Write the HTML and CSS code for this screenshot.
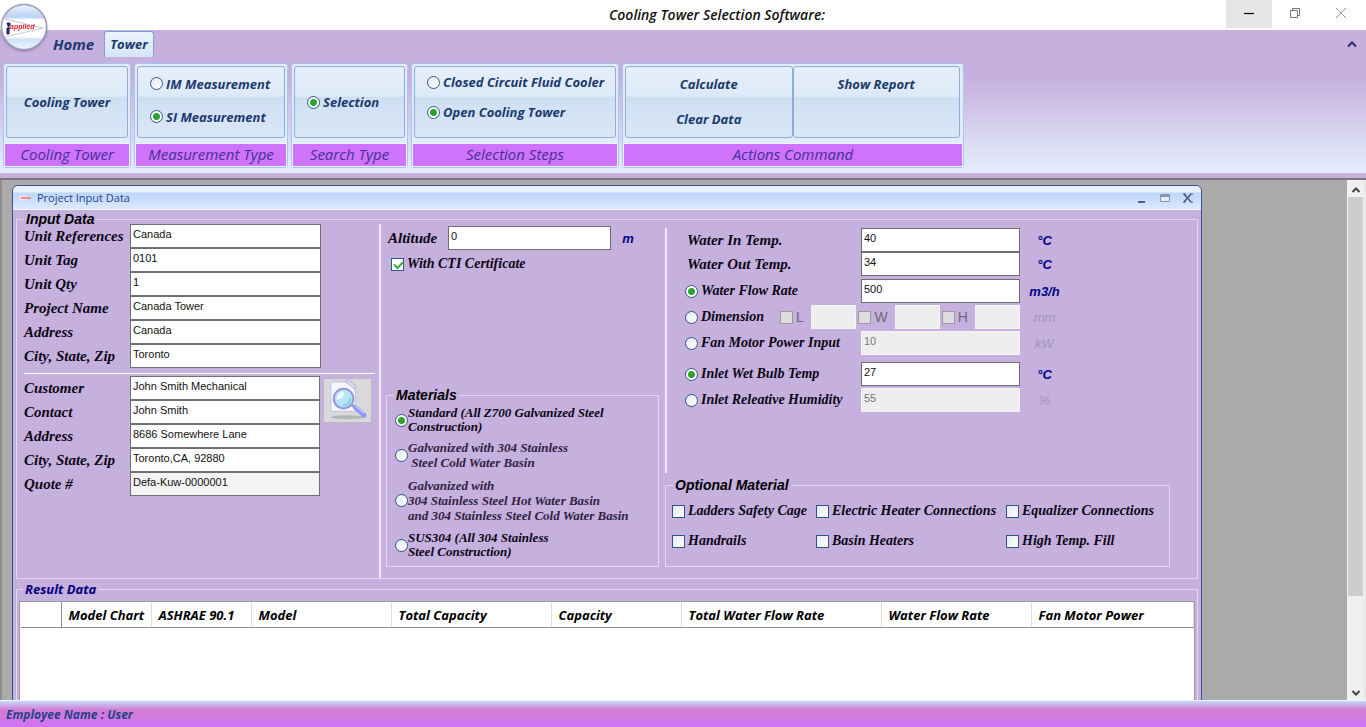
FILE: index.html
```html
<!DOCTYPE html>
<html lang="en">

<head>
    <meta charset="UTF-8">
    <title>Cooling Tower Selection Software</title>
    <meta name="viewport" content="width=device-width, initial-scale=1.0" />
    <link rel="stylesheet" href="styles.css">
</head>

<body>
    <header class="titlebar">
        <h1>Cooling Tower Selection Software:</h1>
        <div class="window-buttons">
            <button class="active" aria-label="Minimize">
                <svg viewBox="0 0 12 12"><path d="M1 6.5h10" stroke="#000" stroke-width="1.2" /></svg>
            </button>
            <button aria-label="Restore">
                <svg viewBox="0 0 12 12" fill="none" stroke="#777"><path d="M1.5 3.5h7v7h-7zM3.5 3.5v-2h7v7h-2" /></svg>
            </button>
            <button aria-label="Close">
                <svg viewBox="0 0 12 12" stroke="#999"><path d="M1 1l10 10M11 1L1 11" /></svg>
            </button>
        </div>
    </header>

    <button class="orb" aria-label="Application menu">
        <svg viewBox="0 0 48 48">
            <defs>
                <linearGradient id="orbFill" x1="0" y1="0" x2="0" y2="1">
                    <stop offset="0" stop-color="#eef4fd" />
                    <stop offset="0.28" stop-color="#b9d2f5" />
                    <stop offset="0.34" stop-color="#fff" />
                    <stop offset="0.72" stop-color="#fff" />
                    <stop offset="0.77" stop-color="#cfe0f7" />
                    <stop offset="1" stop-color="#f4f8fe" />
                </linearGradient>
            </defs>
            <circle cx="24" cy="24" r="22.5" fill="url(#orbFill)" stroke="#9a9db8" stroke-width="1.5" />
            <path d="M5 16l38 9L5 34" fill="none" stroke="#bbb" stroke-width="0.8" />
            <path d="M7 20h3v3h-2zM7 25h2v6h-2zM8 23l2 3" fill="#22226a" stroke="#22226a" />
            <text x="10" y="25.500" class="orb-text">applied</text>
        </svg>
    </button>

    <nav class="tabs">
        <a href="#" class="tab">Home</a>
        <a href="#" class="tab selected">Tower</a>
        <button class="collapse" aria-label="Collapse ribbon">
            <svg viewBox="0 0 10 8"><path d="M1 6.500L5 2.500l4 4" fill="none" stroke="#2b2b66" stroke-width="2" /></svg>
        </button>
    </nav>

    <div class="ribbon">
        <section class="group group-tower">
            <div class="panel">
                <button class="command">Cooling Tower</button>
            </div>
            <h2>Cooling Tower</h2>
        </section>
        <section class="group group-measure">
            <div class="panel spaced">
                <label><input type="radio" name="measure">IM Measurement</label>
                <label><input type="radio" name="measure" checked>SI Measurement</label>
            </div>
            <h2>Measurement Type</h2>
        </section>
        <section class="group group-search">
            <div class="panel">
                <label><input type="radio" name="search" checked>Selection</label>
            </div>
            <h2>Search Type</h2>
        </section>
        <section class="group group-steps">
            <div class="panel">
                <label><input type="radio" name="steps">Closed Circuit Fluid Cooler</label>
                <label><input type="radio" name="steps" checked>Open Cooling Tower</label>
            </div>
            <h2>Selection Steps</h2>
        </section>
        <section class="group group-actions">
            <div class="panel-row">
                <div class="panel commands">
                    <button class="command">Calculate</button>
                    <button class="command">Clear Data</button>
                </div>
                <div class="panel commands">
                    <button class="command">Show Report</button>
                </div>
            </div>
            <h2>Actions Command</h2>
        </section>
    </div>

    <main class="workspace">
        <div class="mdi">
            <div class="child-window">
                <div class="child-title">
                    <svg class="child-icon" viewBox="0 0 12 12"><path d="M0 3l12 3L0 9z" fill="#fbe3e6" /><path d="M1 6h10" stroke="#e8707a" stroke-width="1.500" /></svg>
                    <span>Project Input Data</span>
                    <div class="child-buttons">
                        <button aria-label="Minimize"><svg viewBox="0 0 12 12"><path d="M2 10h7" stroke="#4a5f85" stroke-width="2" /></svg></button>
                        <button aria-label="Maximize"><svg viewBox="0 0 12 12"><path d="M1.500 2.500h9v7h-9z" fill="#e8eef8" stroke="#8a94a8" /><path d="M1 4h10" stroke="#8a94a8" stroke-width="2" /></svg></button>
                        <button aria-label="Close"><svg viewBox="0 0 12 12"><path d="M2 2l7 8M9 2l-7 8" stroke="#4a5f85" stroke-width="1.600" /><path d="M1 2h3M8 2h3M1 10h3M8 10h3" stroke="#4a5f85" /></svg></button>
                    </div>
                </div>

                <fieldset class="box input-data">
                    <legend>Input Data</legend>
                    <div class="columns">
                        <div class="col-left">
                            <div class="fields">
                                <label for="unitRef">Unit References</label><input id="unitRef" type="text" value="Canada">
                                <label for="unitTag">Unit Tag</label><input id="unitTag" type="text" value="0101">
                                <label for="unitQty">Unit Qty</label><input id="unitQty" type="text" value="1">
                                <label for="project">Project Name</label><input id="project" type="text" value="Canada Tower">
                                <label for="address">Address</label><input id="address" type="text" value="Canada">
                                <label for="city">City, State, Zip</label><input id="city" type="text" value="Toronto">
                            </div>
                            <hr>
                            <div class="customer">
                                <div class="fields">
                                    <label for="customer">Customer</label><input id="customer" type="text" value="John Smith Mechanical">
                                    <label for="contact">Contact</label><input id="contact" type="text" value="John Smith">
                                    <label for="custAddress">Address</label><input id="custAddress" type="text" value="8686 Somewhere Lane">
                                    <label for="custCity">City, State, Zip</label><input id="custCity" type="text" value="Toronto,CA, 92880">
                                    <label for="quote">Quote #</label><input id="quote" type="text" value="Defa-Kuw-0000001" readonly>
                                </div>
                                <button class="search" aria-label="Find customer">
                                    <svg viewBox="0 0 48 44">
                                        <ellipse cx="24" cy="39" rx="17" ry="2" fill="#b5b5b5" />
                                        <path d="M7 3h15l3-2 7 6v26H7z" fill="#f6f5ff" stroke="#c3bfe8" />
                                        <path d="M22 3l10 8V7l-7-6z" fill="#dcd9f5" stroke="#b4afe0" />
                                        <circle cx="20" cy="20" r="10" fill="#b8e6f7" stroke="#8f9bd6" stroke-width="2" />
                                        <path d="M13 21a7 7 0 0 1 8-8c-1 5-3 7-8 8z" fill="#effbff" />
                                        <path d="M19 27c5 0 8-3 8-8" fill="none" stroke="#84cfe9" stroke-width="2" />
                                        <path d="M28 26l4 3" stroke="#9a9fd0" stroke-width="3" />
                                        <path d="M32 29l9 8" stroke="#8d98f2" stroke-width="5" stroke-linecap="round" />
                                        <path d="M32 27l9 8" stroke="#b7c0ff" stroke-width="2" />
                                    </svg>
                                </button>
                            </div>
                        </div>

                        <div class="col-mid">
                            <div class="altitude">
                                <label for="altitude">Altitude</label>
                                <input id="altitude" type="text" value="0">
                                <span class="unit">m</span>
                            </div>
                            <label class="check"><input type="checkbox" checked>With CTI Certificate</label>
                            <fieldset class="box materials">
                                <legend>Materials</legend>
                                <div class="material-list">
                                    <label><input type="radio" name="material" checked><span>Standard (All Z700 Galvanized Steel<br>Construction)</span></label>
                                    <label class="soft"><input type="radio" name="material"><span>Galvanized with 304 Stainless<br>&nbsp;Steel Cold Water Basin</span></label>
                                    <label class="soft"><input type="radio" name="material"><span>Galvanized with<br>304 Stainless Steel Hot Water Basin<br>and 304 Stainless Steel Cold Water Basin</span></label>
                                    <label><input type="radio" name="material"><span>SUS304 (All 304 Stainless<br>Steel Construction)</span></label>
                                </div>
                            </fieldset>
                        </div>

                        <div class="col-right">
                            <div class="water">
                                <div class="rows tight">
                                    <div class="row">
                                        <label for="waterIn">Water In Temp.</label>
                                        <input id="waterIn" type="text" value="40"><span class="unit">°C</span>
                                    </div>
                                    <div class="row">
                                        <label for="waterOut">Water Out Temp.</label>
                                        <input id="waterOut" type="text" value="34"><span class="unit">°C</span>
                                    </div>
                                </div>
                                <div class="rows">
                                    <div class="row">
                                        <label class="option"><input type="radio" name="flow" checked>Water Flow Rate</label>
                                        <input type="text" value="500" aria-label="Water Flow Rate value"><span class="unit">m3/h</span>
                                    </div>
                                    <div class="row">
                                        <label class="option short"><input type="radio" name="flow">Dimension</label>
                                        <div class="dimensions">
                                            <label><input type="checkbox" disabled>L</label><input type="text" disabled aria-label="Length">
                                            <label><input type="checkbox" disabled>W</label><input type="text" disabled aria-label="Width">
                                            <label><input type="checkbox" disabled>H</label><input type="text" disabled aria-label="Height">
                                        </div>
                                        <span class="unit off">mm</span>
                                    </div>
                                    <div class="row">
                                        <label class="option"><input type="radio" name="flow">Fan Motor Power Input</label>
                                        <input type="text" value="10" disabled aria-label="Fan Motor Power value"><span class="unit off">kW</span>
                                    </div>
                                </div>
                                <div class="rows">
                                    <div class="row">
                                        <label class="option"><input type="radio" name="inlet" checked>Inlet Wet Bulb Temp</label>
                                        <input type="text" value="27" aria-label="Inlet Wet Bulb Temp value"><span class="unit">°C</span>
                                    </div>
                                    <div class="row">
                                        <label class="option"><input type="radio" name="inlet">Inlet Releative Humidity</label>
                                        <input type="text" value="55" disabled aria-label="Inlet Humidity value"><span class="unit off">%</span>
                                    </div>
                                </div>
                            </div>
                            <fieldset class="box optional">
                                <legend>Optional Material</legend>
                                <div class="options">
                                    <label class="check"><input type="checkbox">Ladders Safety Cage</label>
                                    <label class="check"><input type="checkbox">Electric Heater Connections</label>
                                    <label class="check"><input type="checkbox">Equalizer Connections</label>
                                    <label class="check"><input type="checkbox">Handrails</label>
                                    <label class="check"><input type="checkbox">Basin Heaters</label>
                                    <label class="check"><input type="checkbox">High Temp. Fill</label>
                                </div>
                            </fieldset>
                        </div>
                    </div>
                </fieldset>

                <fieldset class="box result-data">
                    <legend>Result Data</legend>
                    <div class="grid-view">
                        <table>
                            <colgroup>
                                <col class="w40"><col class="w90"><col class="w100"><col class="w140"><col class="w160">
                                <col class="w130"><col class="w200"><col class="w150"><col>
                            </colgroup>
                            <thead>
                                <tr>
                                    <th></th>
                                    <th>Model Chart</th>
                                    <th>ASHRAE 90.1</th>
                                    <th>Model</th>
                                    <th>Total Capacity</th>
                                    <th>Capacity</th>
                                    <th>Total Water Flow Rate</th>
                                    <th>Water Flow Rate</th>
                                    <th>Fan Motor Power</th>
                                </tr>
                            </thead>
                        </table>
                    </div>
                </fieldset>
            </div>
        </div>
        <div class="scrollbar">
            <button aria-label="Scroll up"><svg viewBox="0 0 10 8"><path d="M1.500 6L5 2.500 8.500 6" fill="none" stroke="#444" stroke-width="2" /></svg></button>
            <div class="track"><div class="thumb"></div></div>
            <button aria-label="Scroll down"><svg viewBox="0 0 10 8"><path d="M1.500 2L5 5.500 8.500 2" fill="none" stroke="#444" stroke-width="2" /></svg></button>
        </div>
    </main>

    <footer class="statusbar">Employee Name : User</footer>
</body>

</html>
```
FILE: styles.css
```css
* {
    margin: 0;
    padding: 0;
    box-sizing: border-box;
}

body {
    font-family: "Open Sans", "Noto Sans", sans-serif;
    font-size: 13px;
    height: 100vh;
    display: flex;
    flex-direction: column;
    position: relative;
    overflow: hidden;
    background: #c6b0de;
}

button {
    border: none;
    background: none;
    font: inherit;
    color: inherit;
}

/* Title bar */
.titlebar {
    height: 30px;
    flex: none;
    display: flex;
    background: #fff;
}

.titlebar h1 {
    flex: 1;
    padding-left: 208px;
    text-align: center;
    font-size: 14px;
    line-height: 30px;
    font-weight: 600;
    font-style: italic;
    color: #111;
}

.window-buttons {
    display: flex;
    padding-right: 2px;
}

.window-buttons button {
    width: 46px;
    height: 28px;
}

.window-buttons .active {
    background: #e5e5e5;
}

.window-buttons svg {
    width: 12px;
    height: 12px;
}

.orb {
    position: absolute;
    top: 3px;
    left: 0;
    width: 48px;
    height: 48px;
}

.orb svg {
    display: block;
    filter: drop-shadow(0 1px 1px rgba(60, 60, 90, 0.4));
}

.orb-text {
    font: italic bold 7px "Liberation Sans", sans-serif;
    fill: #e3202a;
}

/* Ribbon */
.tabs {
    height: 33px;
    flex: none;
    display: flex;
    align-items: center;
    padding: 0 9px 5px 48px;
    font-weight: bold;
    font-style: italic;
    color: #1b3a6e;
}

.tab {
    color: inherit;
    text-decoration: none;
    padding: 0 5px;
    height: 26px;
    line-height: 26px;
    font-size: 15px;
}

.tab.selected {
    margin-left: 5px;
    background: linear-gradient(#e9f3fc, #d5e5f7);
    border: 1px solid #7c9fd6;
    border-bottom: none;
    border-radius: 3px 3px 0 0;
    font-size: 13px;
    line-height: 24px;
}

.collapse {
    margin-left: auto;
    width: 10px;
    height: 24px;
}

.collapse svg {
    display: block;
    width: 10px;
    height: 8px;
}

.ribbon {
    flex: none;
    height: 117px;
    display: flex;
    align-items: flex-start;
    gap: 3px;
    padding: 0 3px 10px;
    background: linear-gradient(#c6b0de 14px, #e4edfc 108px, #e4edfc 110px, #c6b0de 110px);
    border-bottom: 2px solid #777;
}

.group {
    height: 105px;
    display: flex;
    flex-direction: column;
    justify-content: space-between;
    padding: 2px 0 0;
    border: 1px solid #a9c4ee;
    border-radius: 3px;
    background: #e1ecfb;
}

.group h2 {
    height: 24px;
    line-height: 21px;
    text-align: center;
    font-size: 15px;
    font-weight: normal;
    font-style: italic;
    color: #43309a;
    background: #cf73fb;
    border: 1px solid #eaf3ff;
}

.group-tower {
    width: 128px;
}

.group-measure {
    width: 154px;
}

.group-search {
    width: 117px;
}

.group-steps {
    width: 208px;
}

.group-actions {
    width: 342px;
}

.panel {
    height: 72px;
    flex: 1;
    display: flex;
    flex-direction: column;
    justify-content: center;
    gap: 12px;
    padding: 0 2px 0 12px;
    border: 1px solid #8fabd8;
    border-radius: 3px;
    background: linear-gradient(#e6effa, #dde9f7 42%, #cfdff2 43%, #dae7f7);
    font-weight: bold;
    font-style: italic;
    color: #1b3a6e;
}

.group > .panel {
    flex: none;
    margin: 0 2px;
}

.group-tower .panel {
    padding: 0;
    justify-content: stretch;
}

.group-tower .command {
    flex: 1;
}

.panel.spaced {
    gap: 15px;
    padding-bottom: 4px;
}

.group-steps .panel {
    padding-bottom: 10px;
}

.panel label {
    display: flex;
    align-items: center;
    gap: 3px;
    line-height: 18px;
    white-space: nowrap;
}

.panel-row {
    display: flex;
    padding: 0 3px 0 2px;
}

.commands {
    justify-content: flex-start;
    gap: 17px;
    padding: 8px 0 0;
}

.command {
    line-height: 18px;
    font-weight: bold;
    font-style: italic;
}

/* Radio buttons and tick boxes */
input[type="radio"],
input[type="checkbox"] {
    appearance: none;
    flex: none;
    width: 13px;
    height: 13px;
    border: 1px solid #2f5688;
    background: linear-gradient(135deg, #e2e9f2, #fff);
}

input[type="radio"] {
    border-radius: 50%;
}

input[type="radio"]:checked {
    background: radial-gradient(circle, #2aa52a 3px, #fff 4px);
}

input[type="checkbox"]:checked {
    background: #fff;
}

input[type="checkbox"]:checked::before {
    content: '';
    display: block;
    width: 7px;
    height: 4px;
    margin: 2px;
    border: solid #2fae3d;
    border-width: 0 0 2px 2px;
    transform: rotate(-45deg);
}

input[type="checkbox"]:disabled {
    border-color: #999;
    background: #ddd;
}

input[type="text"] {
    min-width: 0;
    height: 24px;
    padding: 0 2px 4px;
    border: 1px solid #6f6f6f;
    background: #fff;
    font: 11px "Liberation Sans", Arial, sans-serif;
    color: #111;
}

input[type="text"]:read-only {
    background: #f3f3f3;
}

input[type="text"]:disabled {
    border-color: #f6f2fa;
    background: #eee;
    color: #777;
}

/* Workspace with the child window */
.workspace {
    flex: 1;
    min-height: 0;
    display: flex;
    border-left: 2px solid #8b8b8b;
    border-right: 2px solid #e8e8e8;
    background: #ababab;
}

.mdi {
    flex: 1;
    overflow: hidden;
    padding: 5px 145px 0 10px;
}

.child-window {
    height: 600px;
    border: 1px solid #3d4f8c;
    border-radius: 6px 6px 0 0;
    padding: 0 3px;
    background: #c6b0de;
}

.child-title {
    height: 24px;
    margin: 0 -3px;
    padding: 0 7px;
    display: flex;
    align-items: center;
    gap: 5px;
    border-radius: 5px 5px 0 0;
    border-bottom: 1px solid #f3f6fd;
    background: linear-gradient(#e6effd 6px, #bdd6fb 7px, #dbe9fe);
    font-size: 11px;
    color: #1e4391;
}

.child-icon {
    width: 12px;
    height: 12px;
}

.child-buttons {
    display: flex;
    gap: 11px;
    margin-left: auto;
}

.child-buttons button {
    width: 12px;
    height: 12px;
}

.child-buttons svg {
    display: block;
}

.box {
    min-width: 0;
    border: 1px solid #e4d6f0;
}

.box legend {
    margin-left: 7px;
    padding: 0 2px;
    font: italic bold 14px/10px "Liberation Sans", Arial, sans-serif;
    color: #000;
}

.input-data {
    margin-top: 4px;
}

.columns {
    display: flex;
    height: 354px;
    font: italic bold 15px "Liberation Serif", "Times New Roman", serif;
    color: #0a0614;
}

.col-left {
    width: 364px;
    padding-left: 7px;
    border-right: 2px solid #f1eaff;
}

.fields {
    display: grid;
    grid-template-columns: 106px 191px;
    grid-auto-rows: 24px;
    align-items: center;
}

.col-left hr {
    margin: 5px 4px 2px 0;
    border: none;
    height: 1px;
    background: #fff;
}

.customer {
    display: flex;
    gap: 3px;
}

.customer .fields {
    grid-template-columns: 106px 190px;
}

.search {
    width: 49px;
    height: 45px;
    margin-top: 2px;
    background: #d9d9dc;
    border: 1px solid #bcb6c4;
}

.search svg {
    display: block;
    width: 100%;
}

.col-mid {
    width: 284px;
    display: flex;
    flex-direction: column;
    padding: 2px 6px 11px 5px;
}

.altitude {
    display: grid;
    grid-template-columns: 62px 163px 34px;
    align-items: center;
    font-size: 15px;
}

.altitude label {
    padding-left: 2px;
}

.unit {
    text-align: center;
    font: italic bold 13px "Liberation Sans", Arial, sans-serif;
    color: #00008b;
}

.unit.off {
    color: #a394b3;
    font-weight: normal;
}

.check,
.option {
    display: flex;
    align-items: center;
    gap: 3px;
    font-size: 14px;
    line-height: 18px;
    white-space: nowrap;
}

.col-mid .check {
    margin: 5px 5px 0;
}

.materials {
    height: 177px;
    margin-top: auto;
}

.material-list {
    padding: 6px 0 0 8px;
    font-size: 13px;
    line-height: 14px;
}

.material-list label {
    display: flex;
    align-items: center;
    margin-bottom: 6px;
    white-space: nowrap;
}

.material-list .soft {
    margin-bottom: 8px;
    line-height: 15px;
    color: #30233f;
}

.col-right {
    flex: 1;
    display: flex;
    flex-direction: column;
    justify-content: space-between;
    padding: 4px 27px 11px 0;
}

.water {
    height: 245px;
    padding-left: 18px;
    border-left: 2px solid #f1eaff;
}

.rows {
    display: flex;
    flex-direction: column;
    gap: 2px;
    margin-bottom: 7px;
}

.rows.tight {
    gap: 0;
    margin-bottom: 3px;
}

.row {
    display: flex;
    align-items: center;
}

.row > label {
    width: 176px;
    padding-left: 2px;
}

.row > .option {
    padding-left: 0;
}

.row > .short {
    width: 95px;
}

.row > input[type="text"] {
    width: 159px;
}

.row .unit {
    width: 49px;
}

.dimensions {
    width: 240px;
    display: grid;
    grid-template-columns: 29px 45px 34px 45px 31px 45px;
    justify-content: space-between;
    align-items: center;
}

.dimensions label {
    display: flex;
    align-items: center;
    gap: 3px;
    font: 14px "Liberation Sans", Arial, sans-serif;
    color: #6f6680;
}

.optional {
    height: 87px;
}

.options {
    display: grid;
    grid-template-columns: 144px 190px auto;
    row-gap: 12px;
    padding: 12px 5px 8px 6px;
}

/* Result grid */
.result-data {
    margin-top: 5px;
    height: 200px;
}

.box.result-data legend {
    margin-left: 6px;
    font: italic bold 13px/10px "Open Sans", sans-serif;
    color: #00007d;
}

.grid-view {
    height: 180px;
    margin: 7px 2px 0;
    padding-left: 1px;
    border: 1px solid #9a9a9a;
    background: #fff;
}

.grid-view table {
    width: 100%;
    table-layout: fixed;
    border-collapse: collapse;
}

.grid-view th {
    height: 25px;
    padding: 1px 0 0 7px;
    border-bottom: 1px solid #8c8c8c;
    border-right: 1px solid #ddd;
    text-align: left;
    font-style: italic;
    white-space: nowrap;
}

.grid-view th:first-child {
    border-right-color: #8c8c8c;
}

.w40 { width: 40px; }
.w90 { width: 90px; }
.w100 { width: 100px; }
.w130 { width: 130px; }
.w140 { width: 140px; }
.w150 { width: 150px; }
.w160 { width: 160px; }
.w200 { width: 200px; }

/* Scroll bar */
.scrollbar {
    width: 17px;
    display: flex;
    flex-direction: column;
    background: #f0f0f0;
}

.scrollbar button {
    height: 17px;
}

.scrollbar svg {
    width: 10px;
    height: 8px;
}

.track {
    flex: 1;
    padding: 0 1px;
}

.thumb {
    height: 82%;
    background: #cdcdcd;
}

/* Status bar */
.statusbar {
    height: 27px;
    flex: none;
    padding-left: 6px;
    border-top: 1px solid #eef4fb;
    background: linear-gradient(#c9d8f5, #d07cd6 9px, #d07cd6 13px, #d073f8);
    font-size: 12px;
    line-height: 28px;
    font-weight: bold;
    font-style: italic;
    color: #24418c;
}
```
